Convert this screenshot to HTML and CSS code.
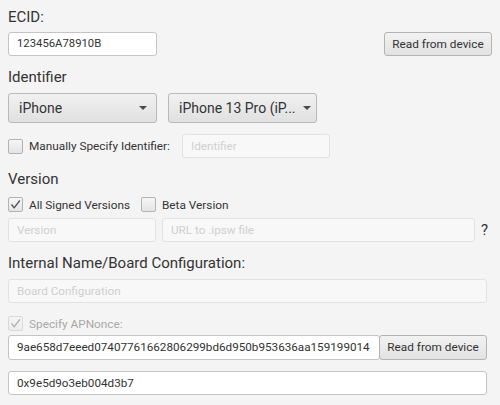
FILE: index.html
```html
<!DOCTYPE html>
<html>
<head>
<meta charset="utf-8">
<link rel="stylesheet" href="styles.css">
</head>
<body>
<div class="form">
  <div class="label l-ecid">ECID:</div>
  <div class="row r-ecid">
    <div class="field ecid-field">123456A78910B</div>
    <div class="btn">Read from device</div>
  </div>

  <div class="label l-ident">Identifier</div>
  <div class="row r-combos">
    <div class="combo"><span class="combo-text">iPhone</span><span class="arrow"></span></div>
    <div class="combo combo2"><span class="combo-text">iPhone 13 Pro (iP...</span><span class="arrow"></span></div>
  </div>

  <div class="row r-manual">
    <span class="cb"></span>
    <span class="cb-label">Manually Specify Identifier:</span>
    <div class="field disabled ident-field">Identifier</div>
  </div>

  <div class="label l-version">Version</div>
  <div class="row r-checks">
    <span class="cb checked"><svg viewBox="0 0 15 15" width="15" height="15"><path d="M3.5 7.5 L6.2 10.8 L11.8 3.5" fill="none" stroke="#4a4a4a" stroke-width="1.3"/></svg></span>
    <span class="cb-label">All Signed Versions</span>
    <span class="cb cb-beta"></span>
    <span class="cb-label">Beta Version</span>
  </div>
  <div class="row r-vfields">
    <div class="field disabled version-field">Version</div>
    <div class="field disabled url-field">URL to .ipsw file</div>
    <span class="help">?</span>
  </div>

  <div class="label l-internal">Internal Name/Board Configuration:</div>
  <div class="field disabled board-field">Board Configuration</div>

  <div class="row r-apcheck dim">
    <span class="cb checked"><svg viewBox="0 0 15 15" width="15" height="15"><path d="M3.5 7.5 L6.2 10.8 L11.8 3.5" fill="none" stroke="#4a4a4a" stroke-width="1.3"/></svg></span>
    <span class="cb-label">Specify APNonce:</span>
  </div>
  <div class="row r-apnonce">
    <div class="field apnonce-field">9ae658d7eeed07407761662806299bd6d950b953636aa159199014</div>
    <div class="btn btn-ap">Read from device</div>
  </div>
  <div class="field gen-field">0x9e5d9o3eb004d3b7</div>
</div>
</body>
</html>
```

FILE: styles.css
```css
* { box-sizing: border-box; }
html, body { margin: 0; padding: 0; }
body {
  background: #f4f4f4;
  font-family: "Roboto", "Open Sans", sans-serif;
  color: #333333;
  width: 500px;
  height: 405px;
  overflow: hidden;
}
.form {
  display: flex;
  flex-direction: column;
  padding: 0 0 0 8px;
}
.label {
  font-size: 15px;
  height: 20px;
  line-height: 20px;
  white-space: nowrap;
}
.l-ecid { margin-top: 7px; }
.l-ident { margin-top: 11px; }
.l-version { margin-top: 11px; }
.l-internal { margin-top: 11px; }

.row { display: flex; align-items: center; }

.field {
  height: 24px;
  line-height: 22px;
  border: 1px solid #c4c4c4;
  border-radius: 3px;
  background: #ffffff;
  font-size: 11.7px;
  padding: 0 8px;
  white-space: nowrap;
  overflow: hidden;
  min-width: 0;
}
.field.disabled {
  background: #f8f8f8;
  border-color: #e2e2e2;
  color: #cfcfcf;
}

.r-ecid { margin-top: 5px; justify-content: space-between; width: 484px; }
.ecid-field { width: 149px; font-size: 11.3px; }

.btn {
  height: 24px;
  line-height: 22px;
  width: 108px;
  flex: none;
  text-align: center;
  font-size: 11.8px;
  border: 1px solid #b4b4b4;
  border-radius: 3px;
  background: linear-gradient(#f2f2f2, #e2e2e2);
  white-space: nowrap;
}

.r-combos { margin-top: 6px; gap: 11px; }
.combo {
  width: 149px;
  height: 30px;
  border: 1px solid #b9b9b9;
  border-radius: 3px;
  background: linear-gradient(#f1f1f1, #e0e0e0);
  display: flex;
  align-items: center;
  justify-content: space-between;
  padding: 0 9px 0 10px;
  font-size: 14px;
}
.combo-text { white-space: nowrap; overflow: hidden; }
.arrow {
  width: 0; height: 0;
  border-left: 4px solid transparent;
  border-right: 4px solid transparent;
  border-top: 4px solid #4a4a4a;
  flex: none;
}
.combo2 { padding-right: 5px; }
.combo2 .arrow { margin-left: 2px; }

.cb {
  width: 15px;
  height: 15px;
  border: 1px solid #b3b3b3;
  border-radius: 2px;
  background: linear-gradient(#f6f6f6, #e4e4e4);
  flex: none;
  display: flex;
  align-items: center;
  justify-content: center;
}
.cb svg { display: block; margin: -1px; }
.cb-label {
  font-size: 11.8px;
  margin-left: 6px;
  white-space: nowrap;
}

.r-manual { margin-top: 11px; }
.ident-field { width: 148px; margin-left: 12px; }

.r-checks { margin-top: 8px; height: 15px; }
.cb-beta { margin-left: 11px; }

.r-vfields { margin-top: 6px; }
.version-field { width: 148px; }
.url-field { width: 313px; margin-left: 6px; }
.help { font-size: 15px; margin-left: 6px; }

.board-field { margin-top: 6px; width: 479px; }

.r-apcheck { margin-top: 13px; height: 15px; }
.dim { opacity: 0.4; }

.r-apnonce { margin-top: 4px; width: 479px; }
.apnonce-field { flex: 1; height: 25px; line-height: 23px; }
.btn-ap { height: 25px; line-height: 23px; margin-left: -1px; }

.gen-field { margin-top: 11px; width: 479px; }
```
